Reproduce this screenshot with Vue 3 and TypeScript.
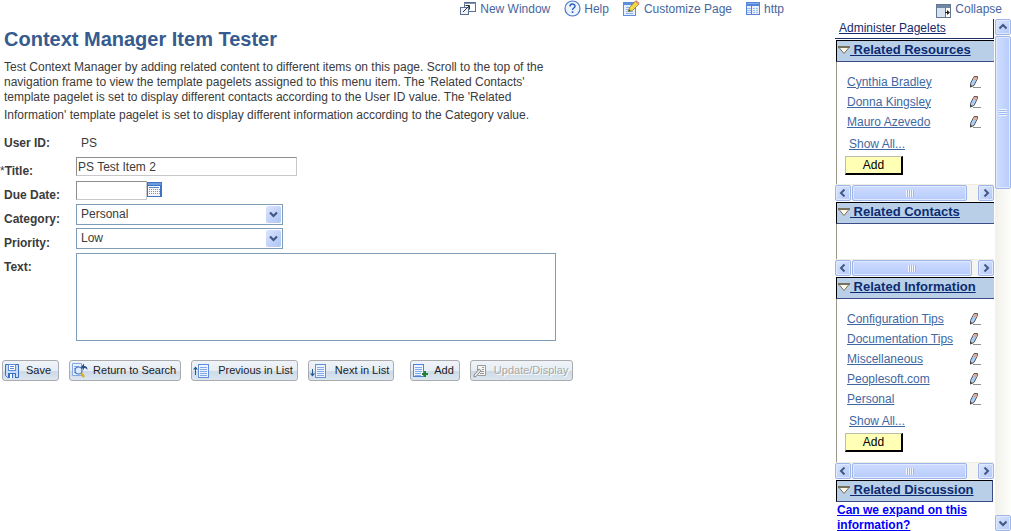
<script setup lang="ts">
import { ref } from 'vue'

interface Pagelet {
  id: string
  title: string
  links: string[]
  thumb: number
  size: string
}

const pagelets: Pagelet[] = [
  { id: 'resources', title: 'Related Resources', links: ['Cynthia Bradley', 'Donna Kingsley', 'Mauro Azevedo'], thumb: 92, size: 'short' },
  { id: 'contacts', title: 'Related Contacts', links: [], thumb: 96, size: 'empty' },
  {
    id: 'information',
    title: 'Related Information',
    links: ['Configuration Tips', 'Documentation Tips', 'Miscellaneous', 'Peoplesoft.com', 'Personal'],
    thumb: 92,
    size: 'long',
  },
]

const title = ref('PS Test Item 2')
const dueDate = ref('')
const category = ref('Personal')
const priority = ref('Low')
const text = ref('')
</script>

<template>
  <div class="page">
    <main class="main">
      <nav class="toolbar" aria-label="Page tools">
        <a href="#" class="tool new-window">
          <svg width="16" height="15" viewBox="0 0 16 15">
            <rect x="4.500" y="1.500" width="11" height="9" fill="#fff" stroke="#5a6f90" />
            <path d="M4 2.500h12" stroke="#8495b0" />
            <rect x="0.500" y="6.500" width="8" height="7" fill="#eef2f8" stroke="#5a6f90" />
            <path d="M3 11l6-6M5.500 4.500h4v4" stroke="#333" fill="none" />
          </svg>
          <span>New Window</span>
        </a>
        <a href="#" class="tool help">
          <svg width="17" height="17" viewBox="0 0 17 17">
            <circle cx="8.500" cy="8.500" r="7.500" fill="#edf4ff" stroke="#4f78c4" stroke-width="1.200" />
            <path d="M6 6.500c0-3.200 5-3.200 5-.3 0 1.800-2.500 1.800-2.500 3.800" fill="none" stroke="#2e62bd" stroke-width="1.500" />
            <rect x="7.700" y="11.300" width="1.700" height="1.700" fill="#2e62bd" />
          </svg>
          <span>Help</span>
        </a>
        <a href="#" class="tool customize">
          <svg width="17" height="17" viewBox="0 0 17 17">
            <rect x="0.500" y="2.500" width="12" height="13" fill="#e3eeff" stroke="#5f8edb" />
            <path d="M1 4h11" stroke="#5f8edb" stroke-width="2" />
            <path d="M3 7.500h5M3 9.500h4M3 11.500h7M3 13.500h7" stroke="#8fb1ea" />
            <path d="M5.500 11.500l1-4L12.500 1l3.500 3L9.500 10.500z" fill="#f1d848" stroke="#8d7a28" stroke-width=".8" />
            <path d="M12 1.500l3.500 3 1.200-1.500L13.300.3z" fill="#e88b76" />
            <path d="M5.500 11.500l.6-2 1.400 1.300z" fill="#333" />
          </svg>
          <span>Customize Page</span>
        </a>
        <a href="#" class="tool http">
          <svg width="14" height="13" viewBox="0 0 14 13">
            <rect width="14" height="13" fill="#5585d6" />
            <path d="M1 1h12v1H1z" fill="#82a9ea" />
            <path d="M1 4h4v8H1zM6 4h7v8H6z" fill="#e8f0ff" />
            <path d="M1 6.500h4M1 8.500h4M1 10.500h4M7 6.500h2M10 6.500h2M7 8.500h2M10 8.500h2M7 10.500h2M10 10.500h2" stroke="#9dbaf0" />
          </svg>
          <span>http</span>
        </a>
      </nav>

      <h1>Context Manager Item Tester</h1>
      <p class="intro">
        Test Context Manager by adding related content to different items on this page. Scroll to the top of the<br />
        navigation frame to view the template pagelets assigned to this menu item. The 'Related Contacts'<br />
        template pagelet is set to display different contacts according to the User ID value. The 'Related<br />
        <span class="last-line">Information' template pagelet is set to display different information according to the Category value.</span>
      </p>

      <form class="form" @submit.prevent>
        <div class="row user">
          <span class="label">User ID:</span>
          <span class="value">PS</span>
        </div>
        <div class="row">
          <label class="label required" for="title"><span class="star">*</span>Title:</label>
          <input id="title" v-model="title" class="box title-box" type="text" />
        </div>
        <div class="row">
          <label class="label" for="due">Due Date:</label>
          <input id="due" v-model="dueDate" class="box date-box" type="text" />
          <button class="calendar" type="button" aria-label="Choose a date">
            <svg width="15" height="15" viewBox="0 0 15 15">
              <rect width="15" height="15" fill="#3e72c4" />
              <rect x="1" y="1" width="13" height="2" fill="#6f9be4" />
              <rect x="1" y="4" width="12" height="10" fill="#f4f6fb" />
              <path d="M2 5.500h10" stroke="#5b86c8" />
              <path d="M2 7.500h11M2 9.500h11M2 11.500h11" stroke="#8793a8" stroke-dasharray="1 1" />
            </svg>
          </button>
        </div>
        <div class="row choice">
          <label class="label" for="category">Category:</label>
          <span class="select">
            <select id="category" v-model="category"><option>Personal</option></select>
            <svg width="15" height="17" viewBox="0 0 15 17">
              <rect width="15" height="17" rx="2" fill="url(#blue-face)" />
              <path d="M4 6.500l3.500 3.500L11 6.500" fill="none" stroke="#405981" stroke-width="2.200" />
            </svg>
          </span>
        </div>
        <div class="row choice">
          <label class="label" for="priority">Priority:</label>
          <span class="select">
            <select id="priority" v-model="priority"><option>Low</option></select>
            <svg width="15" height="17" viewBox="0 0 15 17">
              <rect width="15" height="17" rx="2" fill="url(#blue-face)" />
              <path d="M4 6.500l3.500 3.500L11 6.500" fill="none" stroke="#405981" stroke-width="2.200" />
            </svg>
          </span>
        </div>
        <div class="row">
          <label class="label" for="text">Text:</label>
          <textarea id="text" v-model="text"></textarea>
        </div>

        <div class="actions">
          <button type="button" class="action save">
            <svg width="14" height="14" viewBox="0 0 14 14">
              <path d="M.5.500h13v13H2.500l-2-2z" fill="#c9dcfa" stroke="#3c6fc2" />
              <rect x="3.500" y=".5" width="7" height="6" fill="#fff" stroke="#5c8ad4" />
              <path d="M5 2.500h4M5 4.500h4" stroke="#5c8ad4" />
              <rect x="3" y="9" width="8" height="5" fill="#3c6fc2" />
              <rect x="5" y="10" width="2" height="4" fill="#fff" />
              <rect x="8" y="10" width="2" height="4" fill="#c9dcfa" />
            </svg>
            <span>Save</span>
          </button>
          <button type="button" class="action return">
            <svg width="17" height="15" viewBox="0 0 17 15">
              <path d="M.5.500h9v12h-9z" fill="#eaf2ff" stroke="#82a8e6" />
              <path d="M2 3.500h5M2 5.500h3M2 9.500h2" stroke="#82a8e6" />
              <circle cx="6.500" cy="7.500" r="3.500" fill="#dcebff" stroke="#4772b5" stroke-width="1.200" />
              <path d="M9 10l3 4" stroke="#d5ac24" stroke-width="2.400" />
              <path d="M9 4l3-3.500V3c2.500 0 3.500 1.500 3.500 4-1-1.500-2-2-3.500-2v2z" fill="#244f86" />
            </svg>
            <span>Return to Search</span>
          </button>
          <button type="button" class="action list">
            <svg width="17" height="14" viewBox="0 0 17 14">
              <rect x="5.500" y=".5" width="10" height="13" fill="#edf4ff" stroke="#5f8fda" />
              <path d="M7 3.500h7M7 5.500h7M7 7.500h7M7 9.500h7M7 11.500h7" stroke="#83a9e8" />
              <path d="M2.500 3v8" stroke="#245a91" />
              <path d="M0 5.500l2.500-3L5 5.500z" fill="#245a91" />
            </svg>
            <span>Previous in List</span>
          </button>
          <button type="button" class="action list">
            <svg width="17" height="14" viewBox="0 0 17 14">
              <rect x="5.500" y=".5" width="10" height="13" fill="#edf4ff" stroke="#5f8fda" />
              <path d="M7 3.500h7M7 5.500h7M7 7.500h7M7 9.500h7M7 11.500h7" stroke="#83a9e8" />
              <path d="M2.500 5v6" stroke="#245a91" />
              <path d="M0 9.500l2.500 3L5 9.500z" fill="#245a91" />
            </svg>
            <span>Next in List</span>
          </button>
          <button type="button" class="action add">
            <svg width="16" height="14" viewBox="0 0 16 14">
              <rect x=".5" y=".5" width="10" height="12" fill="#edf4ff" stroke="#4f82d4" />
              <path d="M2 3.500h7M2 5.500h7M2 7.500h7M2 9.500h6M2 11.500h6" stroke="#83a9e8" />
              <path d="M12 7v6M9 10h6" stroke="#218330" stroke-width="2" />
            </svg>
            <span>Add</span>
          </button>
          <button type="button" class="action" disabled>
            <svg width="14" height="14" viewBox="0 0 14 14">
              <path d="M4.500 8V1.500h8v10H5" fill="#f5f5f3" stroke="#999" />
              <path d="M9 3.500h2M9 5.500h2M7 7.500h4M7 9.500h4" stroke="#999" />
              <path d="M1 11l5-6 2 1.500-5 6-2 .5z" fill="#e8e8e6" stroke="#888" />
            </svg>
            <span>Update/Display</span>
          </button>
        </div>
      </form>
    </main>

    <aside class="side">
      <a href="#" class="tool collapse">
        <svg width="15" height="14" viewBox="0 0 15 14">
          <rect x=".5" y=".5" width="14" height="13" fill="#fff" stroke="#64788f" />
          <rect x="1" y="1" width="13" height="3" fill="#6f86a5" />
          <rect x="1" y="4" width="8" height="9" fill="#d7e3ef" />
          <path d="M9.500 4v9" stroke="#64788f" />
          <path d="M9 8.500h3" stroke="#222" />
          <path d="M11 6l3 2.500-3 2.500z" fill="#222" />
        </svg>
        <span>Collapse</span>
      </a>
      <div class="frame">
        <div class="pane">
          <div class="admin"><a href="#">Administer Pagelets</a></div>
          <section v-for="p in pagelets" :key="p.id" class="pagelet">
            <h2>
              <svg width="12" height="9" viewBox="0 0 12 9">
                <path d="M1 1.500h10L6 7.500z" fill="#fff8e8" stroke="#77705c" />
                <path d="M0 1h12" stroke="#77705c" stroke-width="2" />
              </svg><a href="#">&nbsp;{{ p.title }}</a>
            </h2>
            <div class="content" :class="p.size">
              <ul v-if="p.links.length">
                <li v-for="link in p.links" :key="link">
                  <a href="#">{{ link }}</a>
                  <button class="edit" type="button" :aria-label="'Edit ' + link">
                    <svg width="12" height="12" viewBox="0 0 12 12">
                      <path d="M1.500 11V7.500L5 .5h3.500v2L5 9.500z" fill="#a9cdf5" stroke="#5c5c5c" />
                      <path d="M5 1h3v2L7 4.500 4 3z" fill="#e0a79c" />
                      <path d="M1 11.500V8.500l2.500 1.500z" fill="#444" />
                      <path d="M4 11.500h8" stroke="#909090" />
                    </svg>
                  </button>
                </li>
              </ul>
              <a v-if="p.links.length" href="#" class="show-all">Show All...</a>
              <button v-if="p.links.length" type="button" class="pagelet-add">Add</button>
            </div>
            <div class="hbar" aria-hidden="true">
              <span class="face knob"><svg width="8" height="8" viewBox="0 0 8 8"><path d="M5.500.5L2 4l3.500 3.500" /></svg></span>
              <span class="track"><span class="face thumb" :style="{ width: p.thumb + '%' }"><i class="grip"></i></span></span>
              <span class="face knob"><svg width="8" height="8" viewBox="0 0 8 8"><path d="M2.500.5L6 4 2.500 7.500" /></svg></span>
            </div>
          </section>
          <section class="pagelet discussion">
            <h2>
              <svg width="12" height="9" viewBox="0 0 12 9">
                <path d="M1 1.500h10L6 7.500z" fill="#fff8e8" stroke="#77705c" />
                <path d="M0 1h12" stroke="#77705c" stroke-width="2" />
              </svg><a href="#">&nbsp;Related Discussion</a>
            </h2>
            <div class="topic"><a href="#">Can we expand on this information?</a></div>
          </section>
        </div>
        <div class="vbar" aria-hidden="true">
          <span class="face knob"><svg width="8" height="8" viewBox="0 0 8 8"><path d="M.5 5.500L4 2l3.500 3.500" /></svg></span>
          <span class="vtrack"><span class="face vthumb"><i class="grip flat"></i></span></span>
          <span class="face knob"><svg width="8" height="8" viewBox="0 0 8 8"><path d="M.5 2.500L4 6l3.500-3.500" /></svg></span>
        </div>
      </div>
    </aside>

    <svg class="defs" width="0" height="0" aria-hidden="true">
      <defs>
        <linearGradient id="blue-face" x1="0" y1="0" x2="1" y2="1">
          <stop offset="0" stop-color="#dbe5fd" />
          <stop offset="1" stop-color="#adc4f6" />
        </linearGradient>
      </defs>
    </svg>
  </div>
</template>

<style>
body {
  margin: 0;
  background: #fff;
}
</style>

<style scoped>
* {
  box-sizing: border-box;
}
.page {
  display: flex;
  height: 100vh;
  overflow: hidden;
  font: 12px/15px "Liberation Sans", Arial, sans-serif;
  color: #3b3b3b;
}
.defs {
  position: absolute;
}
button,
input,
select,
textarea {
  margin: 0;
  font: inherit;
  color: inherit;
  border-radius: 0;
}
svg {
  display: block;
  flex: none;
}
.main {
  flex: 1;
  min-width: 0;
}
.toolbar {
  display: flex;
  justify-content: flex-end;
  align-items: center;
  gap: 14px;
  height: 19px;
  padding-right: 51px;
}
.toolbar svg {
  margin-bottom: 2px;
}
.tool {
  display: flex;
  align-items: center;
  gap: 4px;
  color: #4766a0;
  text-decoration: none;
}
.help {
  gap: 3px;
}
h1 {
  margin: 8px 0 0;
  padding-left: 4px;
  font-size: 20px;
  line-height: 24px;
  color: #365b8f;
}
.intro {
  margin: 9px 0 0;
  padding-left: 4px;
  white-space: nowrap;
}
.last-line {
  display: block;
  margin-top: 3px;
}
.form {
  margin-top: 8px;
}
.row {
  display: flex;
  align-items: flex-start;
  min-height: 24px;
  padding-top: 2px;
}
.choice {
  padding-top: 1px;
}
.label {
  width: 76px;
  padding: 7px 0 0 4px;
  line-height: 15px;
  font-weight: bold;
}
.required {
  padding-left: 0;
}
.star {
  font-weight: normal;
}
.choice .label {
  padding-top: 8px;
}
.user .label {
  padding-top: 3px;
}
.value {
  padding: 3px 0 0 5px;
}
.box {
  height: 19px;
  padding: 0 1px;
  background: #fff;
  border: 1px solid #c8c8c8;
  border-top-color: #8e8e8e;
  border-left-color: #8e8e8e;
}
.title-box {
  width: 221px;
}
.date-box {
  width: 71px;
}
.calendar {
  margin-top: 1px;
  padding: 0;
  border: 0;
  background: none;
}
.select {
  position: relative;
  width: 207px;
}
select {
  display: block;
  width: 100%;
  height: 21px;
  padding: 0 20px 0 4px;
  appearance: none;
  background: #fff;
  border: 1px solid #7f9db9;
}
.select svg {
  position: absolute;
  top: 2px;
  right: 2px;
  pointer-events: none;
}
textarea {
  width: 480px;
  height: 88px;
  padding: 2px;
  resize: none;
  border: 1px solid #7f9db9;
}
.actions {
  display: flex;
  gap: 10px;
  margin-top: 19px;
  padding-left: 2px;
}
.action {
  display: flex;
  align-items: center;
  gap: 7px;
  height: 21px;
  padding: 0 4px 0 2px;
  font-size: 11px;
  line-height: 15px;
  color: #1c1c1c;
  white-space: nowrap;
  background: linear-gradient(#f0f4f9 0, #e6edf5 50%, #ccd9e7 52%, #dce6f0 100%);
  border: 1px solid #a9abae;
  border-radius: 3px;
}
.save {
  padding-right: 7px;
}
.return {
  gap: 4px;
}
.list {
  padding-left: 1px;
  gap: 8px;
}
.add {
  margin-left: 6px;
  padding-right: 5px;
  gap: 5px;
}
.action:disabled {
  gap: 7px;
  color: #aaa9a2;
  text-shadow: 1px 1px #fff;
}
.side {
  display: flex;
  flex-direction: column;
  width: 176px;
}
.collapse {
  align-self: flex-end;
  flex: none;
  height: 19px;
  padding-right: 9px;
}
.collapse svg {
  margin-top: 3px;
}
.frame {
  display: flex;
  flex: 1;
  min-height: 0;
}
.pane {
  flex: 1;
  margin-right: 1px;
  overflow: hidden;
}
.admin {
  height: 20px;
  margin-bottom: 1px;
  padding: 2px 0 0 4px;
  border-bottom: 1px solid #1c3066;
  border-right: 1px solid #1c3066;
}
.admin a {
  color: #14296b;
}
h2 {
  display: flex;
  align-items: center;
  height: 22px;
  margin: 0 0 0 1px;
  padding: 0 0 2px 1px;
  font-size: 13px;
  line-height: 16px;
  background: #b9cfe7;
  border: 1px solid #000;
  border-right: 0;
  border-bottom: 1px solid #3b4c86;
}
h2 a {
  color: #0b2c72;
  white-space: nowrap;
}
.content {
  margin-left: 1px;
  padding: 10px 13px 0 10px;
  border-left: 1px solid #9b9789;
}
.short {
  height: 122px;
}
.empty {
  height: 35px;
}
.long {
  height: 163px;
}
ul {
  margin: 0;
  padding: 0;
  list-style: none;
}
li {
  display: flex;
  justify-content: space-between;
  align-items: center;
  height: 20px;
}
li a,
.show-all {
  color: #3f68a3;
  white-space: nowrap;
}
.edit {
  padding: 0;
  border: 0;
  background: none;
}
.show-all {
  display: block;
  margin: 5px 0 4px 2px;
}
.pagelet-add {
  display: block;
  width: 58px;
  height: 19px;
  margin-left: -2px;
  padding: 0;
  line-height: 15px;
  color: #000;
  background: #ffffb5;
  border: solid #000;
  border-width: 1px 2px 2px 1px;
  border-top-color: #bdbdae;
  border-left-color: #bdbdae;
}
.hbar {
  display: flex;
  height: 17px;
  margin-bottom: 1px;
  background: #f6f5f0;
  border-top: 1px solid #eeece3;
}
.face {
  display: flex;
  align-items: center;
  justify-content: center;
  background: linear-gradient(135deg, #dbe5fe, #b3c8f8);
  border: 1px solid #9db5e9;
  border-radius: 2px;
  box-shadow: inset 0 0 0 1px #dfe9ff;
}
.face path {
  fill: none;
  stroke: #405981;
  stroke-width: 2;
}
.knob {
  flex: none;
  width: 16px;
  height: 16px;
}
.track {
  flex: 1;
  padding: 0 1px;
}
.thumb {
  height: 16px;
  background: linear-gradient(#cddbff, #b7cbfb);
}
.grip {
  width: 8px;
  height: 7px;
  background: repeating-linear-gradient(90deg, #f1f5ff 0, #f1f5ff 1px, #9fbaf0 1px, #9fbaf0 2px);
}
.flat {
  background: repeating-linear-gradient(#f1f5ff 0, #f1f5ff 1px, #9fbaf0 1px, #9fbaf0 2px);
}
.discussion h2 {
  margin-right: 1px;
  border-right: 1px solid #3b4c86;
}
.topic {
  padding: 1px 2px 0;
  font-weight: bold;
}
.topic a {
  color: #00f;
}
.vbar {
  display: flex;
  flex-direction: column;
  width: 16px;
  background: linear-gradient(90deg, #f1f0ea, #fefefb);
}
.vtrack {
  flex: 1;
  padding-top: 1px;
}
.vthumb {
  height: 32%;
  background: linear-gradient(90deg, #cfddff, #b8ccfc);
}
</style>
